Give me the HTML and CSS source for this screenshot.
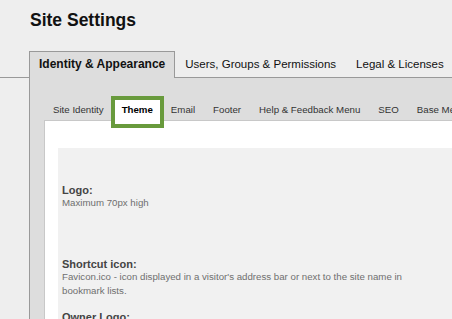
FILE: index.html
```html
<!DOCTYPE html>
<html lang="en">
<head>
  <meta charset="UTF-8">
  <meta name="viewport" content="width=device-width, initial-scale=1.0">
  <title>Site Settings</title>
  <link rel="stylesheet" href="styles.css">
</head>
<body>
  <h1>Site Settings</h1>

  <ul class="tabs">
    <li class="active">Identity &amp; Appearance</li>
    <li>Users, Groups &amp; Permissions</li>
    <li>Legal &amp; Licenses</li>
  </ul>

  <div class="panel">
    <ul class="subtabs">
      <li>Site Identity</li>
      <li class="active">Theme</li>
      <li>Email</li>
      <li>Footer</li>
      <li>Help &amp; Feedback Menu</li>
      <li>SEO</li>
      <li>Base Menu</li>
    </ul>

    <div class="content">
      <div class="fields">
        <div class="field field-logo">
          <div class="label">Logo:</div>
          <div class="desc">Maximum 70px high</div>
        </div>
        <div class="field">
          <div class="label">Shortcut icon:</div>
          <div class="desc">Favicon.ico - icon displayed in a visitor's address bar or next to the site name in bookmark lists.</div>
        </div>
        <div class="field">
          <div class="label">Owner Logo:</div>
        </div>
      </div>
    </div>
  </div>
</body>
</html>
```

FILE: styles.css
```css
html, body {
  overflow: hidden;
}
body {
  margin: 0;
  background-color: #eeeeee;
  font-family: 'Liberation Sans', Arial, sans-serif;
  color: #111;
}
h1 {
  margin: 10px 0 0 30px;
  font-size: 17.5px;
  line-height: 20px;
  font-weight: bold;
}
.tabs {
  display: flex;
  list-style: none;
  margin: 21px 0 0 0;
  padding: 0 0 0 29px;
  border-bottom: 1px solid #999;
  white-space: nowrap;
}
.tabs li {
  font-size: 11.5px;
  line-height: 15px;
  padding: 5px 9px 6px;
  border: 1px solid transparent;
  border-bottom: 0;
  margin-bottom: -1px;
}
.tabs li.active {
  font-size: 12px;
  font-weight: bold;
  background-color: #dddddd;
  border-color: #999;
}
.panel {
  margin-left: 29px;
  width: 520px;
  height: 300px;
  background-color: #dddddd;
  border-left: 1px solid #999;
  padding: 18px 0 0 14px;
}
.subtabs {
  display: flex;
  align-items: flex-start;
  list-style: none;
  margin: 0;
  padding: 0;
  height: 24px;
  white-space: nowrap;
}
.subtabs li {
  font-size: 9.7px;
  line-height: 13px;
  color: #333;
  padding: 3px 5px 8px;
  border: 4px solid transparent;
}
.subtabs li.active {
  position: relative;
  font-weight: bold;
  color: #000;
  background-color: #fff;
  border-color: #689a3c;
  padding: 3px 7px 8px;
  margin: 0 -2px;
}
.content {
  background-color: #fff;
  border-top: 1px solid #c8c8c8;
  border-left: 1px solid #c8c8c8;
  padding: 27px 0 0 13px;
  height: 200px;
}
.fields {
  background-color: #f1f1f1;
  padding: 37px 0 0 4px;
  height: 200px;
}
.field {
  min-height: 39px;
  padding-bottom: 14px;
}
.field-logo {
  min-height: 60px;
}
.label {
  font-size: 11px;
  line-height: 11px;
  font-weight: bold;
  color: #444;
}
.desc {
  font-size: 9.7px;
  line-height: 14px;
  color: #6f6f6f;
  max-width: 360px;
}
```
